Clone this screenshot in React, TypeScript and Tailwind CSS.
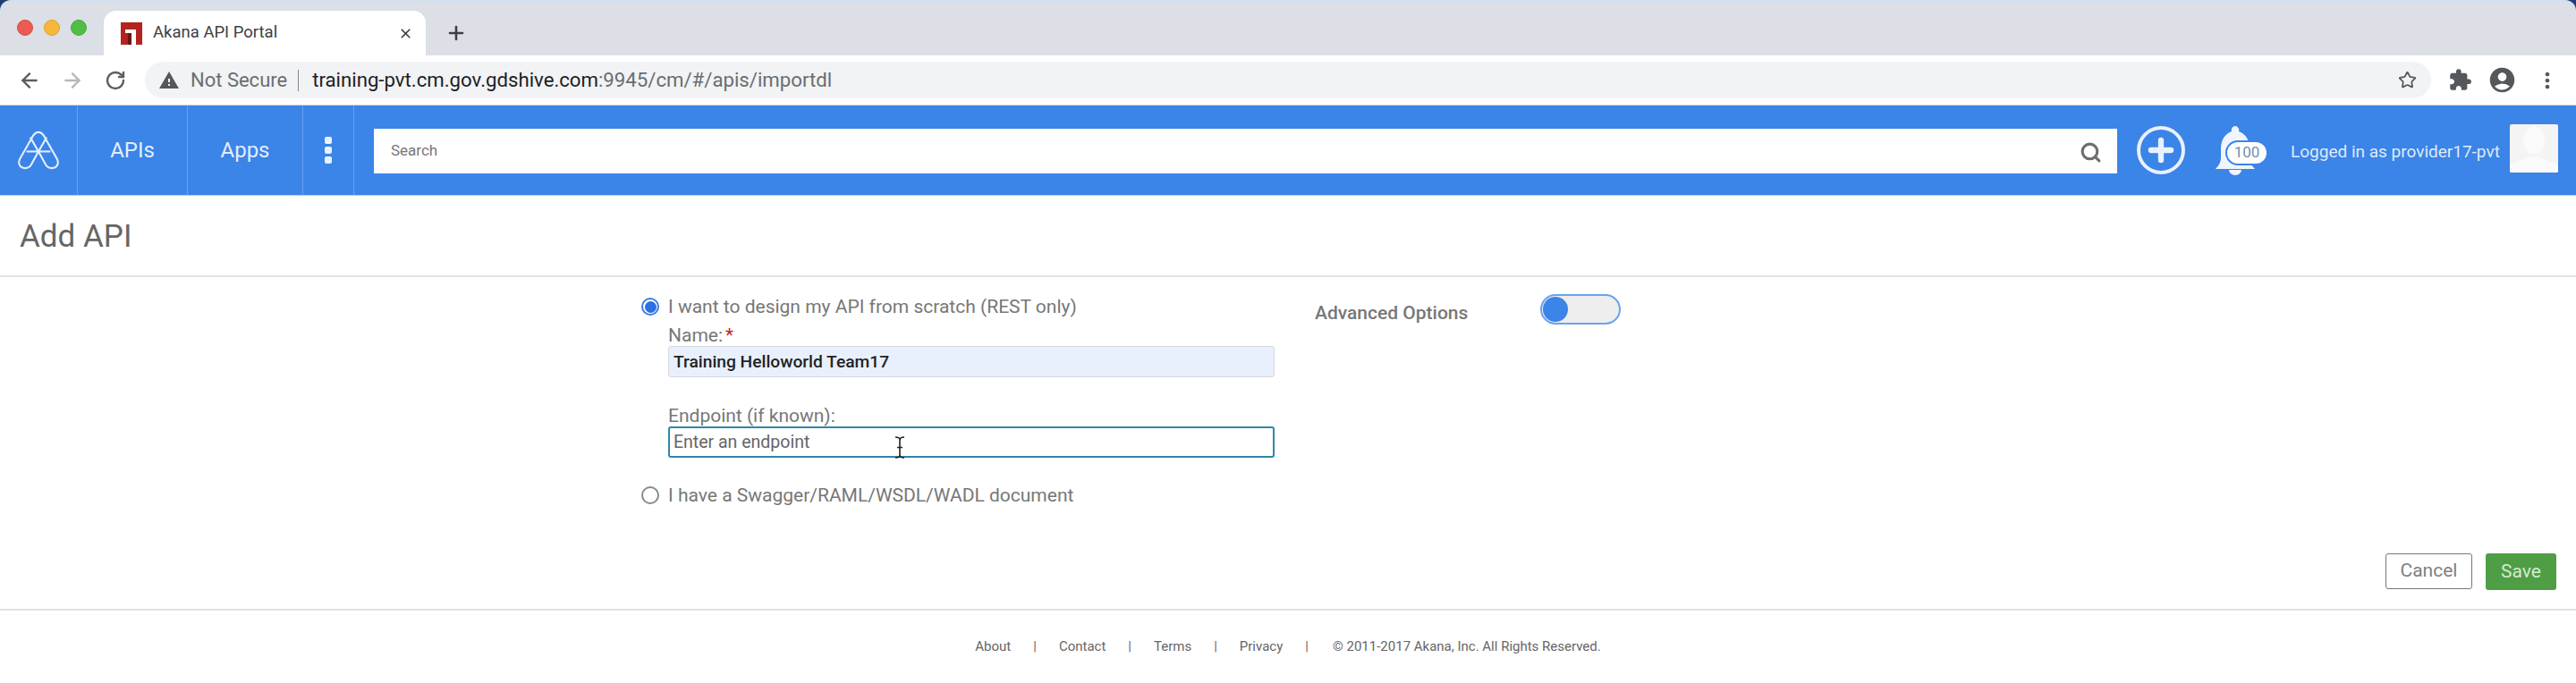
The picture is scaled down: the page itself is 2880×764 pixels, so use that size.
import { ArrowLeft, ArrowRight, Plus, RotateCw, Search, Star, X } from "lucide-react";
import { MdAccountCircle, MdExtension, MdMoreVert, MdWarning } from "react-icons/md";

function AkanaLogo() {
  return (
    <svg width="48" height="46" viewBox="0 0 50 46" fill="none" stroke="#e3eefc" strokeWidth="2.2">
      <path d="M25 2c-3 0-5 2-6.500 4.500L3.500 33c-3 5.500 0 11 6 11 3.500 0 5.500-1.500 7-4L25 24.500l8.500 15.500c1.500 2.500 3.500 4 7 4 6 0 9-5.500 6-11L31.500 6.500C30 4 28 2 25 2Z" />
      <path d="M11 24.500h28" />
      <path d="M25 24.500 15.500 8M25 24.500 34.500 8" />
    </svg>
  );
}

function Favicon() {
  return (
    <svg width="24" height="25" viewBox="0 0 24 25" className="shrink-0">
      <rect width="24" height="25" fill="#b3231f" />
      <path d="M5 8h12v17h-5V12H5Z" fill="#fff" />
      <rect x="8" y="12" width="4" height="13" fill="#6d1512" />
    </svg>
  );
}

function BellIcon() {
  return (
    <svg width="46" height="56" viewBox="0 0 46 56" fill="#f0f5fd" className="shrink-0">
      <path d="M23 1a4.500 4.500 0 0 1 4 6c8 3 12 10 12 19v10c0 6 3 10 6 13H1c3-3 6-7 6-13V26c0-9 4-16 12-19a4.500 4.500 0 0 1 4-6Z" />
      <path d="M16 50h14a7 6 0 0 1-14 0Z" />
    </svg>
  );
}

function IBeam() {
  return (
    <svg width="14" height="25" viewBox="0 0 14 25" fill="none" stroke="#222" strokeWidth="1.600" className="absolute left-[250px] top-[9px]">
      <path d="M2 1c3 0 5 1 5 3v17c0 2-2 3-5 3M12 1c-3 0-5 1-5 3v17c0 2 2 3 5 3M4 12.500h6" />
    </svg>
  );
}

function BrowserChrome() {
  return (
    <div className="bg-[#1d3d73]">
      <div className="h-[62px] rounded-tl-[12px] rounded-tr-[12px] border-t-2 border-[#cfe0f3] bg-[#dcdfe5] flex items-end">
        <div className="w-[116px] h-[60px] flex gap-3 pl-[19px] pt-[20px] shrink-0">
          <span className="w-[18px] h-[18px] rounded-full bg-[#ec5a54] border border-[#d8483f]" />
          <span className="w-[18px] h-[18px] rounded-full bg-[#f6b73c] border border-[#e0a02c]" />
          <span className="w-[18px] h-[18px] rounded-full bg-[#52bd45] border border-[#44a83a]" />
        </div>
        <div className="w-[360px] h-[50px] bg-white rounded-t-[14px] flex items-center pl-[19px] pr-[14px] gap-[12px]">
          <Favicon />
          <span className="text-[18.500px] text-[#3c4043] flex-1">Akana API Portal</span>
          <X size={17} strokeWidth={2.4} className="text-[#3c4043]" />
        </div>
        <div className="h-[50px] flex items-center pl-[22px]">
          <Plus size={24} strokeWidth={2.6} className="text-[#3c4043]" />
        </div>
      </div>
      <div className="h-[56px] bg-white border-b border-[#d5d7db] flex items-center pl-[20px] pr-[18px]">
        <ArrowLeft size={26} strokeWidth={2.2} className="text-[#5a5d61]" />
        <ArrowRight size={26} strokeWidth={2.2} className="text-[#b5b7ba] ml-[22px]" />
        <RotateCw size={24} strokeWidth={2.4} className="text-[#5a5d61] ml-[23px]" />
        <div className="ml-[21px] w-[2556px] h-[41px] rounded-full bg-[#f1f3f4] flex items-center pl-[15px] pr-[16px]">
          <MdWarning size={24} className="text-[#54575b]" />
          <span className="ml-[12px] text-[22px] text-[#6a6d70]">Not Secure</span>
          <span className="ml-[12px] w-px h-[24px] bg-[#85888b]" />
          <span className="ml-[15px] text-[22.200px] text-[#202124]">
            training-pvt.cm.gov.gdshive.com<span className="text-[#6a6d70]">:9945/cm/#/apis/importdl</span>
          </span>
          <Star size={21} strokeWidth={2} className="ml-auto text-[#54575b]" />
        </div>
        <div className="ml-auto flex items-center gap-[17px]">
          <MdExtension size={27} className="text-[#54575b]" />
          <MdAccountCircle size={33} className="text-[#54575b]" />
          <MdMoreVert size={28} className="text-[#54575b] ml-[3px]" />
        </div>
      </div>
    </div>
  );
}

function TopNav() {
  return (
    <nav className="h-[101px] bg-[#3b84e8] border-b border-[#a9d4ef] flex items-center text-white">
      <div className="w-[87px] h-full border-r border-[#68a2ee] flex items-center justify-center">
        <AkanaLogo />
      </div>
      <div className="w-[123px] h-full border-r border-[#68a2ee] flex items-center justify-center text-[24px] text-[#e3eefc]">APIs</div>
      <div className="w-[129px] h-full border-r border-[#68a2ee] flex items-center justify-center text-[24px] text-[#e3eefc]">Apps</div>
      <div className="w-[57px] h-full border-r border-[#68a2ee] flex flex-col items-center justify-center gap-[3px]">
        <span className="w-[8px] h-[8px] rounded-[2px] bg-[#e9f1fd]" />
        <span className="w-[8px] h-[8px] rounded-[2px] bg-[#e9f1fd]" />
        <span className="w-[8px] h-[8px] rounded-[2px] bg-[#e9f1fd]" />
      </div>
      <div className="ml-[22px] w-[1949px] h-[50px] mt-[2px] bg-white flex items-center pl-[19px] pr-[17px] justify-between">
        <span className="text-[17px] text-[#777]">Search</span>
        <Search size={25} strokeWidth={3} className="text-[#6e6e6e] mt-[2px]" />
      </div>
      <div className="ml-[22px] w-[54px] h-[54px] rounded-full border-[4px] border-[#e9f1fd] flex items-center justify-center">
        <Plus size={38} strokeWidth={4} className="text-[#e9f1fd]" />
      </div>
      <div className="relative ml-[33px] w-[58px] h-[56px] flex items-center">
        <BellIcon />
        <span className="absolute left-[14px] top-[19px] w-[44px] h-[24px] rounded-full bg-white ring-2 ring-[#3b84e8] text-[17px] text-[#6f8fb0] flex items-center justify-center">100</span>
      </div>
      <span className="ml-[27px] mt-[5px] text-[19px] text-[#dfeafb] whitespace-nowrap">Logged in as provider17-pvt</span>
      <div className="ml-[11px] w-[54px] h-[54px] -mt-[4px] bg-[#f4f4f4] rounded-[2px] overflow-hidden">
        <svg width="54" height="54" viewBox="0 0 54 54" fill="#fafafa">
          <ellipse cx="27" cy="18" rx="12" ry="16" />
          <path d="M0 54v-8c6-5 18-6 21-10h12c3 4 15 5 21 10v8Z" />
        </svg>
      </div>
    </nav>
  );
}

function AddApiForm() {
  return (
    <div className="flex pl-[717px] pt-[21px]">
      <div className="w-[708px] text-[#777] text-[21px] leading-[24px]">
        <label className="flex items-center gap-[10px]">
          <span className="w-[20px] h-[20px] rounded-full border-2 border-[#3b7de0] flex items-center justify-center shrink-0">
            <span className="w-[13px] h-[13px] rounded-full bg-[#2c6fe0]" />
          </span>
          I want to design my API from scratch (REST only)
        </label>
        <div className="pl-[30px] mt-[8px]">
          <p>
            Name:<span className="text-[#c0272d] ml-[3px]">*</span>
          </p>
          <div className="h-[35px] rounded-[3px] bg-[#e8f0fe] border border-[#d4d8de] pl-[5px] flex items-center text-[#222] font-medium text-[19.200px]">
            Training Helloworld Team17
          </div>
          <p className="mt-[31px]">Endpoint (if known):</p>
          <div className="relative h-[35px] rounded-[3px] bg-white border-2 border-[#2f87a8] pl-[4px] flex items-center text-[#666] text-[19.500px]">
            Enter an endpoint
            <IBeam />
          </div>
        </div>
        <label className="flex items-center gap-[10px] mt-[30px]">
          <span className="w-[20px] h-[20px] rounded-full border-2 border-[#8a8a8a] shrink-0" />
          I have a Swagger/RAML/WSDL/WADL document
        </label>
      </div>
      <div className="ml-[45px] flex items-start">
        <span className="w-[252px] mt-[7px] text-[21px] leading-[24px] font-medium text-[#777]">Advanced Options</span>
        <div className="w-[90px] h-[34px] -mt-[2px] rounded-full bg-[#eeeeee] border-2 border-[#6aa3ec] flex items-center pl-[1px]">
          <span className="w-[28px] h-[28px] rounded-full bg-[#3b84e8]" />
        </div>
      </div>
    </div>
  );
}

const footerLinks = ["About", "Contact", "Terms", "Privacy"];

function Footer() {
  return (
    <footer className="h-[83px] border-t-2 border-[#e3e3e3] flex items-center justify-center text-[15px] text-[#666]">
      {footerLinks.map((link) => (
        <span key={link} className="flex items-center">
          {link}
          <span className="mx-[25px]">|</span>
        </span>
      ))}
      <span className="ml-[2px]">© 2011-2017 Akana, Inc. All Rights Reserved.</span>
    </footer>
  );
}

export default function App() {
  return (
    <div className="w-[2880px] h-[764px] bg-white overflow-hidden font-['Roboto',sans-serif]">
      <BrowserChrome />
      <TopNav />
      <div className="h-[91px] border-b-2 border-[#e3e3e3] flex items-center pl-[22px]">
        <h1 className="text-[35px] text-[#666] mt-[4px]">Add API</h1>
      </div>
      <AddApiForm />
      <div className="flex justify-end gap-[15px] pr-[22px] mt-[53px] mb-[21px]">
        <button className="w-[97px] h-[40px] rounded-[3px] border border-[#777] bg-white text-[21px] text-[#808080]">Cancel</button>
        <button className="w-[79px] h-[41px] rounded-[3px] bg-[#4f9e46] text-[21px] text-[#d3ead0]">Save</button>
      </div>
      <Footer />
    </div>
  );
}
